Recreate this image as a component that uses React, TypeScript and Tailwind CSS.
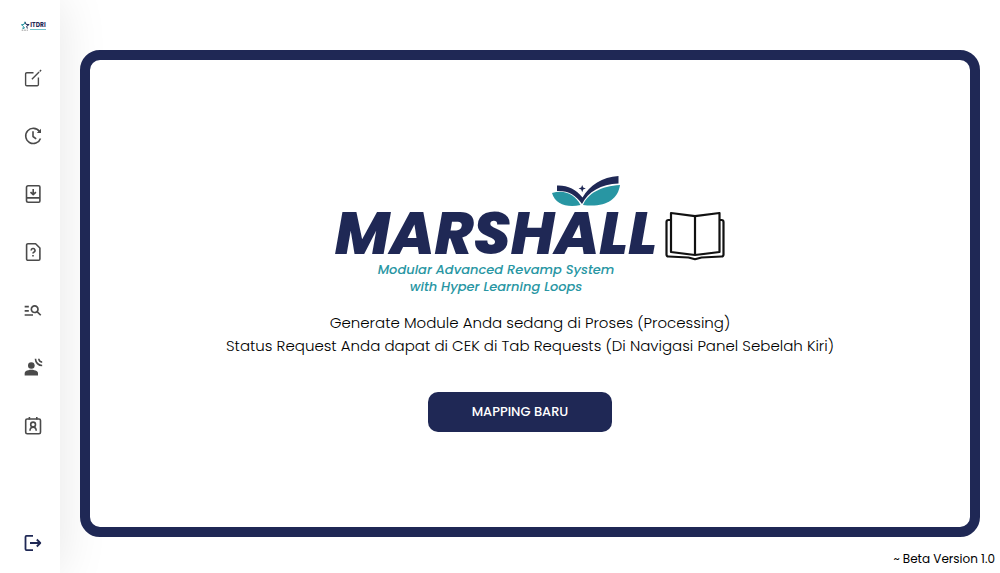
import type { ReactNode } from "react";
import { MdManageSearch, MdSpatialAudio } from "react-icons/md";

function Icon({ children, width = 2 }: { children: ReactNode; width?: number }) {
  return (
    <svg
      viewBox="0 0 20 20"
      className="size-5"
      fill="none"
      stroke="currentColor"
      strokeWidth={width}
      strokeLinejoin="round"
      aria-hidden="true"
    >
      {children}
    </svg>
  );
}

const links = [
  {
    label: "Mapping",
    icon: (
      <Icon width={1.4}>
        <path d="M10.5 4.7H3.8a1.2 1.2 0 0 0-1.2 1.2v10.600a1.200 1.200 0 0 0 1.200 1.200h10.400a1.200 1.200 0 0 0 1.200-1.200V9.500M8.900 11.300l7.200-7.200M16.700 3.400l1.400-1.400" />
      </Icon>
    ),
  },
  {
    label: "Riwayat",
    icon: (
      <Icon width={1.6}>
        <path d="M16.500 5.500A7.600 7.600 0 1 0 17.500 12.400M10 5.300v5.200l3.200 2.300" />
        <path d="M18 2.700v4.200h-4.200z" fill="currentColor" stroke="none" />
      </Icon>
    ),
  },
  {
    label: "Unduhan",
    icon: (
      <Icon width={1.6}>
        <path d="M16.900 13.900V2.900a1.200 1.200 0 0 0-1.200-1.200H5.200A1.700 1.700 0 0 0 3.500 3.400v13.200a1.700 1.700 0 0 0 1.700 1.700h10.500a1.200 1.200 0 0 0 1.200-1.200v-3.200H3.500M10.200 5v5.300M7.500 8.100l2.700 2.600 2.700-2.600" />
      </Icon>
    ),
  },
  {
    label: "Bantuan",
    icon: (
      <Icon width={1.6}>
        <path d="M12.600 1.700H4.900a1.300 1.300 0 0 0-1.300 1.300v14a1.300 1.300 0 0 0 1.300 1.300h10.700a1.300 1.300 0 0 0 1.300-1.300V6zM8.200 8.500a1.900 1.900 0 1 1 2.600 1.700c-.6.300-.8.600-.8 1.400M10 13v1.500" />
      </Icon>
    ),
  },
  { label: "Requests", icon: <MdManageSearch className="size-5" aria-hidden="true" /> },
  { label: "Audio", icon: <MdSpatialAudio className="size-5" aria-hidden="true" /> },
  {
    label: "Profil",
    icon: (
      <Icon width={1.6}>
        <rect x="2.700" y="3" width="14.800" height="14.800" rx="1.500" />
        <path d="M6.400 1v2.500M13.800 1v2.500M7 14.800c0-4.800 6.200-4.800 6.200 0" />
        <circle cx="10.100" cy="8.500" r="2.400" />
      </Icon>
    ),
  },
];

function BrandMark() {
  return (
    <span className="flex h-3 items-start text-[#1f2855]">
      <svg viewBox="0 0 12 12" className="h-3 w-2.5" fill="none" aria-hidden="true">
        <path d="M6 1l1.200 3 3.800.3-3 2 .8 2.700" stroke="#1f2855" strokeWidth="1.200" />
        <path d="M6 1L4.800 4.100l-3.100.4 2.500 2-.8 2.800L6 7.800" stroke="#2896a3" strokeWidth="1.200" />
        <path d="M2 11h2M5 11h2M8 11h1.500" stroke="#999" strokeWidth="1.200" />
      </svg>
      <span className="flex flex-col pt-px">
        <span className="text-[6px] leading-[8px] font-bold">ITDRI</span>
        <span className="h-px w-full bg-[#78c3cc]" />
      </span>
    </span>
  );
}

function Leaves() {
  return (
    <svg viewBox="0 0 70 32" className="h-8 w-[70px]" aria-hidden="true">
      <path d="M1 18C13 14 24 19 29.500 30C16 33 4 29 1 18Z" fill="#2896a3" />
      <path d="M32 30C36 19 50 11 69 10C67 25 53 33 32 30Z" fill="#2896a3" />
      <path
        d="M6 10.500C16 10 25 14 31.500 22.500C39 10 51 2 67.500 1V8.500C50 9 37 17 31 29C25 20 17 15.500 6 16Z"
        fill="#1f2855"
      />
      <path d="M31.200 10l1 2.600 2.600 1-2.600 1-1 2.600-1-2.600-2.600-1 2.600-1z" fill="#1f2855" />
    </svg>
  );
}

function OpenBook() {
  return (
    <svg
      viewBox="0 0 60 50"
      className="h-[50px] w-[60px]"
      fill="none"
      stroke="#111"
      strokeWidth="2.200"
      strokeLinejoin="round"
      aria-hidden="true"
    >
      <path d="M6 2l24 3.200L54.500 2v39L30 44 6 41z" />
      <path d="M30 5v39" />
      <path d="M6 9H3.500A2 2 0 0 0 1.500 11v32.500a2 2 0 0 0 2 2l20 1 6.500 1.700 6.500-1.700 20-1a2 2 0 0 0 2-2V11a2 2 0 0 0-2-2H54.500" />
    </svg>
  );
}

export default function App() {
  return (
    <div className="flex min-h-screen bg-white font-['Poppins','Inter',sans-serif] text-black">
      <aside className="flex w-15 shrink-0 flex-col items-center bg-white pt-5 pb-5 pl-1.5 text-[#4a4a4a] shadow-[0_0_50px_rgba(0,0,0,0.1)]">
        <a href="#beranda" aria-label="ITDRI">
          <BrandMark />
        </a>
        <nav className="mt-9 flex flex-col gap-[38px]">
          {links.map((link) => (
            <a key={link.label} href="#menu" aria-label={link.label}>
              {link.icon}
            </a>
          ))}
        </nav>
        <button type="button" aria-label="Keluar" className="mt-auto text-[#1f2855]">
          <Icon width={1.8}>
            <path d="M10 2.900H3.500a1 1 0 0 0-1 1v12.200a1 1 0 0 0 1 1H10M7 10h10M13.800 6.500l3.500 3.500-3.500 3.500" />
          </Icon>
        </button>
      </aside>

      <div className="flex min-w-0 flex-1 flex-col pt-[50px]">
        <main className="mx-5 flex flex-1 flex-col items-center justify-center rounded-[20px] border-10 border-[#1f2855] bg-white text-center">
          <div className="mt-5 flex items-end gap-2">
            <div>
              <div className="flex justify-end pr-9">
                <Leaves />
              </div>
              <h1 className="text-[59px] leading-[54px] font-extrabold text-[#1f2855] italic">
                MARSHALL
              </h1>
              <p className="text-[13px] leading-[17px] font-medium text-[#2896a3] italic">
                Modular Advanced Revamp System
                <br />
                with Hyper Learning Loops
              </p>
            </div>
            <div className="pb-[34px]">
              <OpenBook />
            </div>
          </div>
          <p className="mt-4 text-[15px] leading-[23px] font-light">
            Generate Module Anda sedang di Proses (Processing)
            <br />
            Status Request Anda dapat di CEK di Tab Requests (Di Navigasi Panel Sebelah Kiri)
          </p>
          <button
            type="button"
            className="mt-[35px] mr-5 h-10 w-46 rounded-[10px] bg-[#1f2855] text-[13px] font-medium text-white"
          >
            MAPPING BARU
          </button>
        </main>
        <footer className="flex h-9 items-center justify-end px-[5px] pt-2 text-xs">
          ~ Beta Version 1.0
        </footer>
      </div>
    </div>
  );
}
